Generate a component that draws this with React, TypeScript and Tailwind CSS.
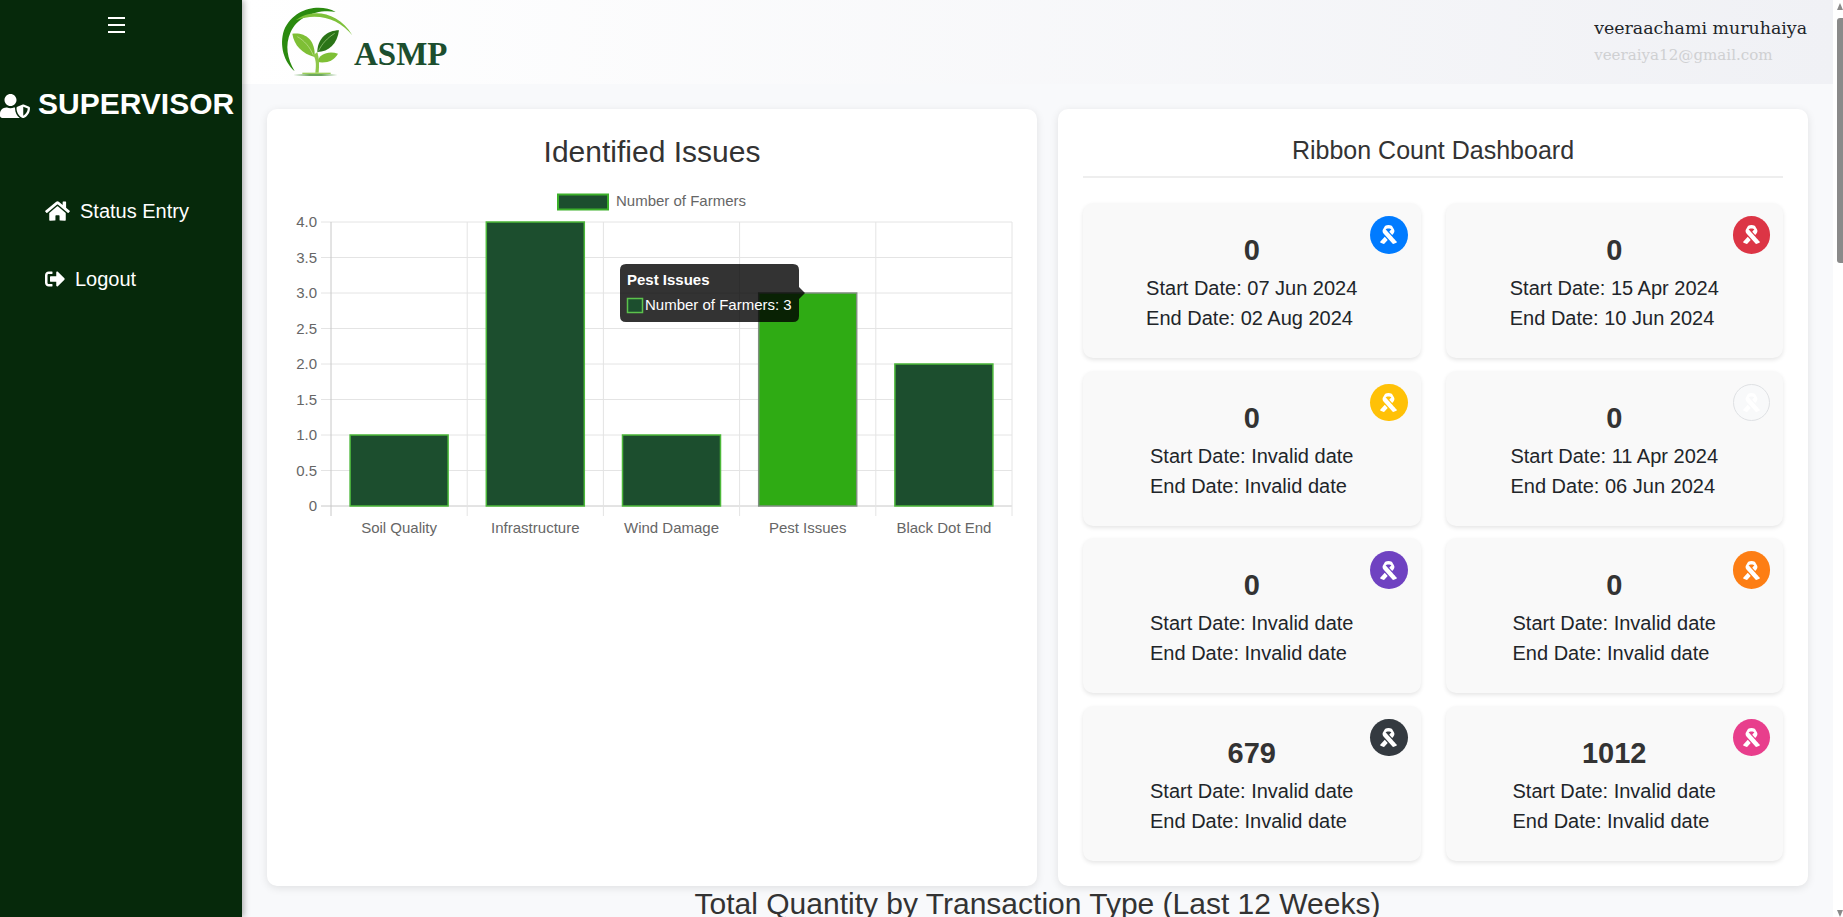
import React from 'react';
import { FaHome, FaRibbon, FaSignOutAlt, FaUserShield } from 'react-icons/fa';

const ribbons = [
  { count: 0, start: '07 Jun 2024', end: '02 Aug 2024', badge: 'bg-[#007bff] text-white' },
  { count: 0, start: '15 Apr 2024', end: '10 Jun 2024', badge: 'bg-[#dc3545] text-white' },
  { count: 0, start: 'Invalid date', end: 'Invalid date', badge: 'bg-[#ffc107] text-white' },
  { count: 0, start: '11 Apr 2024', end: '06 Jun 2024', badge: 'bg-[#f8f9fa] text-white border border-[#dfe1e4]' },
  { count: 0, start: 'Invalid date', end: 'Invalid date', badge: 'bg-[#6f42c1] text-white' },
  { count: 0, start: 'Invalid date', end: 'Invalid date', badge: 'bg-[#fd7e14] text-white' },
  { count: 679, start: 'Invalid date', end: 'Invalid date', badge: 'bg-[#343a40] text-white' },
  { count: 1012, start: 'Invalid date', end: 'Invalid date', badge: 'bg-[#e83e8c] text-white' },
];

const issues = [
  { label: 'Soil Quality', value: 1 },
  { label: 'Infrastructure', value: 4 },
  { label: 'Wind Damage', value: 1 },
  { label: 'Pest Issues', value: 3, hover: true },
  { label: 'Black Dot End', value: 2 },
];

const ticks = ['4.0', '3.5', '3.0', '2.5', '2.0', '1.5', '1.0', '0.5', '0'];

// chart area inside the svg
const left = 44;
const right = 725;
const top = 37;
const bottom = 321;
const stepX = (right - left) / 5;
const stepY = (bottom - top) / 8;

function Logo() {
  return (
    <svg viewBox="0 0 255 240" className="w-[85px] h-[80px] shrink-0">
      <path d="M185 30C140 5 60 15 30 85C15 130 30 180 62 208C40 170 32 130 50 90C70 45 130 20 185 30Z" fill="#2b8a0f" />
      <path d="M65 55C110 20 190 25 235 100C195 50 130 30 65 55Z" fill="#7ec13a" />
      <path d="M55 95C90 90 125 110 122 165C85 155 60 130 55 95Z" fill="#7ebf35" />
      <path d="M70 104C90 115 108 135 118 160" stroke="#c4e39a" strokeWidth="2" fill="none" />
      <path d="M195 85C160 85 130 110 130 150C165 150 190 125 195 85Z" fill="#2a7417" />
      <path d="M182 94C160 108 144 125 134 146" stroke="#a8d488" strokeWidth="2" fill="none" />
      <path d="M192 155C165 145 135 155 130 180C160 185 180 175 192 155Z" fill="#7ebf35" />
      <path d="M118 160C128 175 126 195 124 212H134C136 190 136 170 130 150Z" fill="#8fc74a" />
      <path d="M85 212H170V216H85Z" fill="#9ccf5a" />
      <path d="M58 219C100 216 150 216 190 219C150 222 100 222 58 219Z" fill="#3c8a2a" />
    </svg>
  );
}

function IssuesChart() {
  return (
    <svg viewBox="0 0 740 360" className="w-[740px] h-[360px] font-['Liberation_Sans',Arial,sans-serif]">
      <rect x="271" y="9.5" width="50" height="15" fill="#1c4e2e" stroke="#3cb02a" strokeWidth="2" />
      <text x="329" y="21" fontSize="15" fill="#666">Number of Farmers</text>

      {ticks.map((t, i) => (
        <g key={t}>
          <line x1={left - 10} x2={right} y1={top + i * stepY} y2={top + i * stepY} stroke={i === 8 ? '#c8c8c8' : '#e4e4e4'} />
          <text x={left - 14} y={top + i * stepY + 5} fontSize="15" fill="#666" textAnchor="end">{t}</text>
        </g>
      ))}
      {[0, 1, 2, 3, 4, 5].map(i => (
        <line key={i} x1={left + i * stepX} x2={left + i * stepX} y1={top} y2={bottom + 10} stroke={i === 0 ? '#c8c8c8' : '#e4e4e4'} />
      ))}

      {issues.map((b, i) => {
        const h = b.value * 2 * stepY;
        const x = left + i * stepX + (stepX - 98) / 2;
        return (
          <g key={b.label}>
            <rect x={x} y={bottom - h} width={98} height={h} fill={b.hover ? '#2fab14' : '#1c4e2e'} stroke={b.hover ? '#7f8f7f' : '#4cb83a'} strokeWidth="1.5" />
            <text x={left + i * stepX + stepX / 2} y={348} fontSize="15" fill="#666" textAnchor="middle">{b.label}</text>
          </g>
        );
      })}

      <path d="M333 85Q333 79 339 79H506Q512 79 512 85V102L518 108L512 114V131Q512 137 506 137H339Q333 137 333 131Z" fill="#000" fillOpacity="0.8" />
      <text x="340" y="100" fontSize="15" fontWeight="700" fill="#fff">Pest Issues</text>
      <rect x="340.5" y="113.5" width="15" height="14" fill="#1c4e2e" stroke="#5cc24c" strokeWidth="1.5" />
      <text x="358" y="125" fontSize="15" fill="#fff">Number of Farmers: 3</text>
    </svg>
  );
}

export default function App() {
  return (
    <div className="flex h-screen overflow-hidden bg-white font-['Liberation_Sans',Arial,sans-serif] text-[#212529]">
      <aside className="w-[242px] shrink-0 bg-[#06290b] text-white shadow-[2px_0_6px_rgba(0,0,0,0.3)] z-10">
        <div className="flex justify-center pt-[17px] pr-[9px]">
          <div className="w-[17px] flex flex-col gap-[5.5px]">
            <span className="h-[1.5px] bg-white" />
            <span className="h-[1.5px] bg-white" />
            <span className="h-[1.5px] bg-white" />
          </div>
        </div>
        <div className="flex items-center gap-[8px] mt-[53px] h-[36px]">
          <FaUserShield className="w-[30px] h-[24px] mt-[4px]" />
          <span className="text-[30px] font-bold leading-none">SUPERVISOR</span>
        </div>
        <nav className="mt-[74px] pl-[45px] flex flex-col gap-[38px] text-[20px] leading-[30px]">
          <a className="flex items-center gap-[10px]">
            <FaHome className="w-[25px] h-[22px]" />
            Status Entry
          </a>
          <a className="flex items-center gap-[10px]">
            <FaSignOutAlt className="w-[20px] h-[20px]" />
            Logout
          </a>
        </nav>
      </aside>

      <div className="flex-1 min-w-0 bg-[#f8f9fb] overflow-hidden">
        <header className="h-[84px] bg-gradient-to-r from-white to-[#f0f1f5] flex justify-between pl-[32px] pr-[26px]">
          <div className="flex items-center">
            <Logo />
            <span className="font-['Liberation_Serif',serif] font-bold text-[33px] text-[#1c4e2e] mt-[26px] -ml-[5px]">ASMP</span>
          </div>
          <div className="pt-[15px] font-['DejaVu_Serif',serif]">
            <div className="text-[17.4px] leading-[26px] text-[#212529]">veeraachami muruhaiya</div>
            <div className="text-[15.1px] leading-[24px] mt-[2px] text-[#cfd0d2]">veeraiya12@gmail.com</div>
          </div>
        </header>

        <main className="px-[25px] pt-[25px]">
          <div className="flex gap-[21px]">
            <section className="w-[770px] bg-white rounded-[10px] shadow-[0_2px_8px_rgba(0,0,0,0.1)] px-[20px] pt-[22px]">
              <h2 className="text-[30px] leading-[42px] text-center text-[#333] mb-[12px]">Identified Issues</h2>
              <IssuesChart />
            </section>

            <section className="w-[750px] bg-white rounded-[10px] shadow-[0_2px_8px_rgba(0,0,0,0.1)] px-[25px] pt-[23px] pb-[25px]">
              <h3 className="text-[25px] leading-[36px] text-center text-[#333] pb-[8px] border-b-2 border-[#eeeeee]">Ribbon Count Dashboard</h3>
              <div className="grid grid-cols-2 gap-x-[25px] gap-y-[12.67px] mt-[25px]">
                {ribbons.map((r, i) => (
                  <div key={i} className="relative bg-[#f9f9f9] rounded-[10px] shadow-[0_2px_4px_rgba(0,0,0,0.1)] pt-[30px] pb-[25px] text-center">
                    <span className={`absolute top-[13px] right-[13px] w-[37.5px] h-[37.5px] rounded-full flex items-center justify-center ${r.badge}`}>
                      <FaRibbon className="w-[19px] h-[19px]" />
                    </span>
                    <div className="text-[29px] leading-[34px] font-bold text-[#333] mb-[6px]">{r.count}</div>
                    <div className="w-fit mx-auto text-left">
                      <div className="text-[20px] leading-[30px]">Start Date: {r.start}</div>
                      <div className="text-[20px] leading-[30px]">End Date: {r.end}</div>
                    </div>
                  </div>
                ))}
              </div>
            </section>
          </div>
          <h2 className="text-[30px] leading-[36px] text-center text-[#333]">Total Quantity by Transaction Type (Last 12 Weeks)</h2>
        </main>
      </div>

      {/* scrollbar */}
      <div className="w-[10px] shrink-0 bg-white flex flex-col items-end justify-between">
        <div className="w-[6px] flex flex-col">
          <div className="mt-[3px] h-0 w-0 border-x-[3px] border-x-transparent border-b-[7px] border-b-[#8a8a8a]" />
          <div className="mt-[8px] h-[245px] bg-[#8a8a8a] rounded-l-[3px]" />
        </div>
        <div className="mb-0 h-0 w-0 border-x-[3px] border-x-transparent border-t-[7px] border-t-[#8a8a8a]" />
      </div>
    </div>
  );
}
